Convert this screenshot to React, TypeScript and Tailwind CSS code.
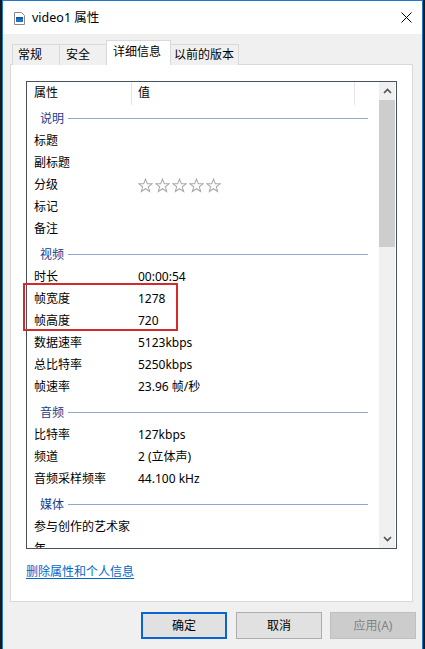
import React from "react";

const FONT = { fontFamily: '"Noto Sans", "Noto Sans CJK SC", sans-serif' };

function Row({ label, value }: { label: string; value?: React.ReactNode }) {
  return (
    <div className="flex h-[22px] shrink-0 items-center text-[12px] leading-[16px] text-black">
      <span className="w-[111px] shrink-0 whitespace-nowrap pl-[7px]">{label}</span>
      <span className="whitespace-nowrap">{value}</span>
    </div>
  );
}

function Group({ label }: { label: string }) {
  return (
    <div className="flex h-[26px] shrink-0 items-center pl-[13px] pt-[3px] text-[12px] leading-[16px]">
      <span className="whitespace-nowrap text-[#1e3c8c]">{label}</span>
      <div className="ml-[4px] mr-[11px] h-px flex-1 bg-[#93a5cc]" />
    </div>
  );
}

function Star() {
  return (
    <svg width="15" height="15" viewBox="0 0 14 14" className="shrink-0">
      <polygon
        points="7,1 8.7,5.3 13.2,5.4 9.6,8.2 10.9,12.6 7,10 3.1,12.6 4.4,8.2 0.8,5.4 5.3,5.3"
        fill="none"
        stroke="#a9a9a9"
        strokeWidth="0.95"
        strokeLinejoin="miter"
      />
    </svg>
  );
}

function Stars() {
  return (
    <span className="flex items-center gap-[2px]">
      <Star />
      <Star />
      <Star />
      <Star />
      <Star />
    </span>
  );
}

export default function App() {
  return (
    <div className="relative h-[649px] w-[425px] overflow-hidden bg-[#1a1a1a]" style={FONT}>
      <div className="ml-[2px] flex h-[649px] w-[421px] flex-col border-x border-t border-[#1f78c8] bg-[#f0f0f0]">
        {/* Title bar */}
        <div className="flex h-[33px] shrink-0 items-center bg-white pl-[11px]">
          <svg width="11" height="13" viewBox="0 0 11 13" className="mt-[1px]">
            <path d="M0.5 0.5 H7.5 L10.5 3.5 V12.5 H0.5 Z" fill="#fff" stroke="#8a8a8a" />
            <rect x="2" y="5" width="7" height="5" fill="#1e73c8" />
            <rect x="2" y="5" width="7" height="1.5" fill="#0e4f97" />
          </svg>
          <span className="ml-[7px] text-[12.5px] leading-[16px] text-black">video1 属性</span>
          <div className="flex-1" />
          <svg width="11" height="11" viewBox="0 0 11 11" className="mr-[10px]">
            <path d="M0.5 0.5 L10.5 10.5 M10.5 0.5 L0.5 10.5" stroke="#000" strokeWidth="1" />
          </svg>
        </div>

        {/* Tabs */}
        <div className="relative z-10 -mb-px ml-[9px] mt-[6px] flex h-[25px] shrink-0 items-end text-[12px] leading-[16px] text-black">
          <div className="flex h-[21px] w-[48px] items-center border-x border-t border-[#d9d9d9] bg-[#f0f0f0] pl-[5px]">常规</div>
          <div className="-ml-px flex h-[21px] w-[48px] items-center border-x border-t border-[#d9d9d9] bg-[#f0f0f0] pl-[6px]">安全</div>
          <div className="relative z-10 -ml-px flex h-[25px] w-[65px] items-center border-x border-t border-[#d9d9d9] bg-white pb-[3px] pl-[6px]">详细信息</div>
          <div className="-ml-px flex h-[21px] w-[69px] items-center border-x border-t border-[#d9d9d9] bg-[#f0f0f0] pl-[3px]">以前的版本</div>
        </div>

        {/* Panel */}
        <div className="ml-[7px] flex h-[538px] w-[403px] shrink-0 flex-col border border-[#d9d9d9] bg-white">
          <div className="ml-[15px] mt-[16px] flex h-[468px] w-[371px] shrink-0 border border-[#48525e] bg-white">
            <div className="flex min-w-0 flex-1 flex-col overflow-hidden">
              {/* Header */}
              <div className="flex h-[22px] shrink-0 items-center text-[12px] leading-[16px] text-black">
                <span className="w-[104px] shrink-0 pl-[7px]">属性</span>
                <div className="h-[23px] w-px self-start bg-[#e3e3e3]" />
                <span className="w-[222px] shrink-0 pl-[6px]">值</span>
                <div className="h-[23px] w-px self-start bg-[#e3e3e3]" />
              </div>
              <Group label="说明" />
              <Row label="标题" />
              <Row label="副标题" />
              <Row label="分级" value={<Stars />} />
              <Row label="标记" />
              <Row label="备注" />
              <Group label="视频" />
              <Row label="时长" value="00:00:54" />
              <Row label="帧宽度" value="1278" />
              <Row label="帧高度" value="720" />
              <Row label="数据速率" value="5123kbps" />
              <Row label="总比特率" value="5250kbps" />
              <Row label="帧速率" value="23.96 帧/秒" />
              <Group label="音频" />
              <Row label="比特率" value="127kbps" />
              <Row label="频道" value="2 (立体声)" />
              <Row label="音频采样频率" value="44.100 kHz" />
              <Group label="媒体" />
              <Row label="参与创作的艺术家" />
              <Row label="年" />
            </div>
            {/* Scrollbar */}
            <div className="mr-[1px] flex w-[16px] shrink-0 flex-col bg-[#f0f0f0]">
              <div className="flex h-[18px] shrink-0 items-center justify-center">
                <svg width="9" height="6" viewBox="0 0 9 6">
                  <path d="M1 5 L4.5 1.5 L8 5" fill="none" stroke="#505050" strokeWidth="1.6" />
                </svg>
              </div>
              <div className="h-[147px] shrink-0 bg-[#cdcdcd]" />
              <div className="flex-1" />
              <div className="flex h-[18px] shrink-0 items-center justify-center">
                <svg width="9" height="6" viewBox="0 0 9 6">
                  <path d="M1 1 L4.5 4.5 L8 1" fill="none" stroke="#505050" strokeWidth="1.6" />
                </svg>
              </div>
            </div>
          </div>
          <div className="ml-[15px] mt-[15px] text-[12px] leading-[16px]">
            <span className="text-[#0066cc] underline underline-offset-2">删除属性和个人信息</span>
          </div>
        </div>

        {/* Buttons */}
        <div className="mt-[10px] flex justify-end pr-[6px] text-[12px] leading-[16px]">
          <div className="flex h-[27px] w-[86px] items-center justify-center border-2 border-[#0a64d2] bg-[#e1e1e1] text-black">确定</div>
          <div className="ml-[9px] flex h-[27px] w-[86px] items-center justify-center border border-[#adadad] bg-[#e1e1e1] text-black">取消</div>
          <div className="ml-[8px] flex h-[27px] w-[86px] items-center justify-center border border-[#bfbfbf] bg-[#cccccc] text-[#838383]">应用(A)</div>
        </div>
      </div>

      {/* Red annotation box */}
      <div className="absolute left-[23px] top-[283px] h-[48px] w-[155px] border-2 border-[#d42a2a]" />
    </div>
  );
}
